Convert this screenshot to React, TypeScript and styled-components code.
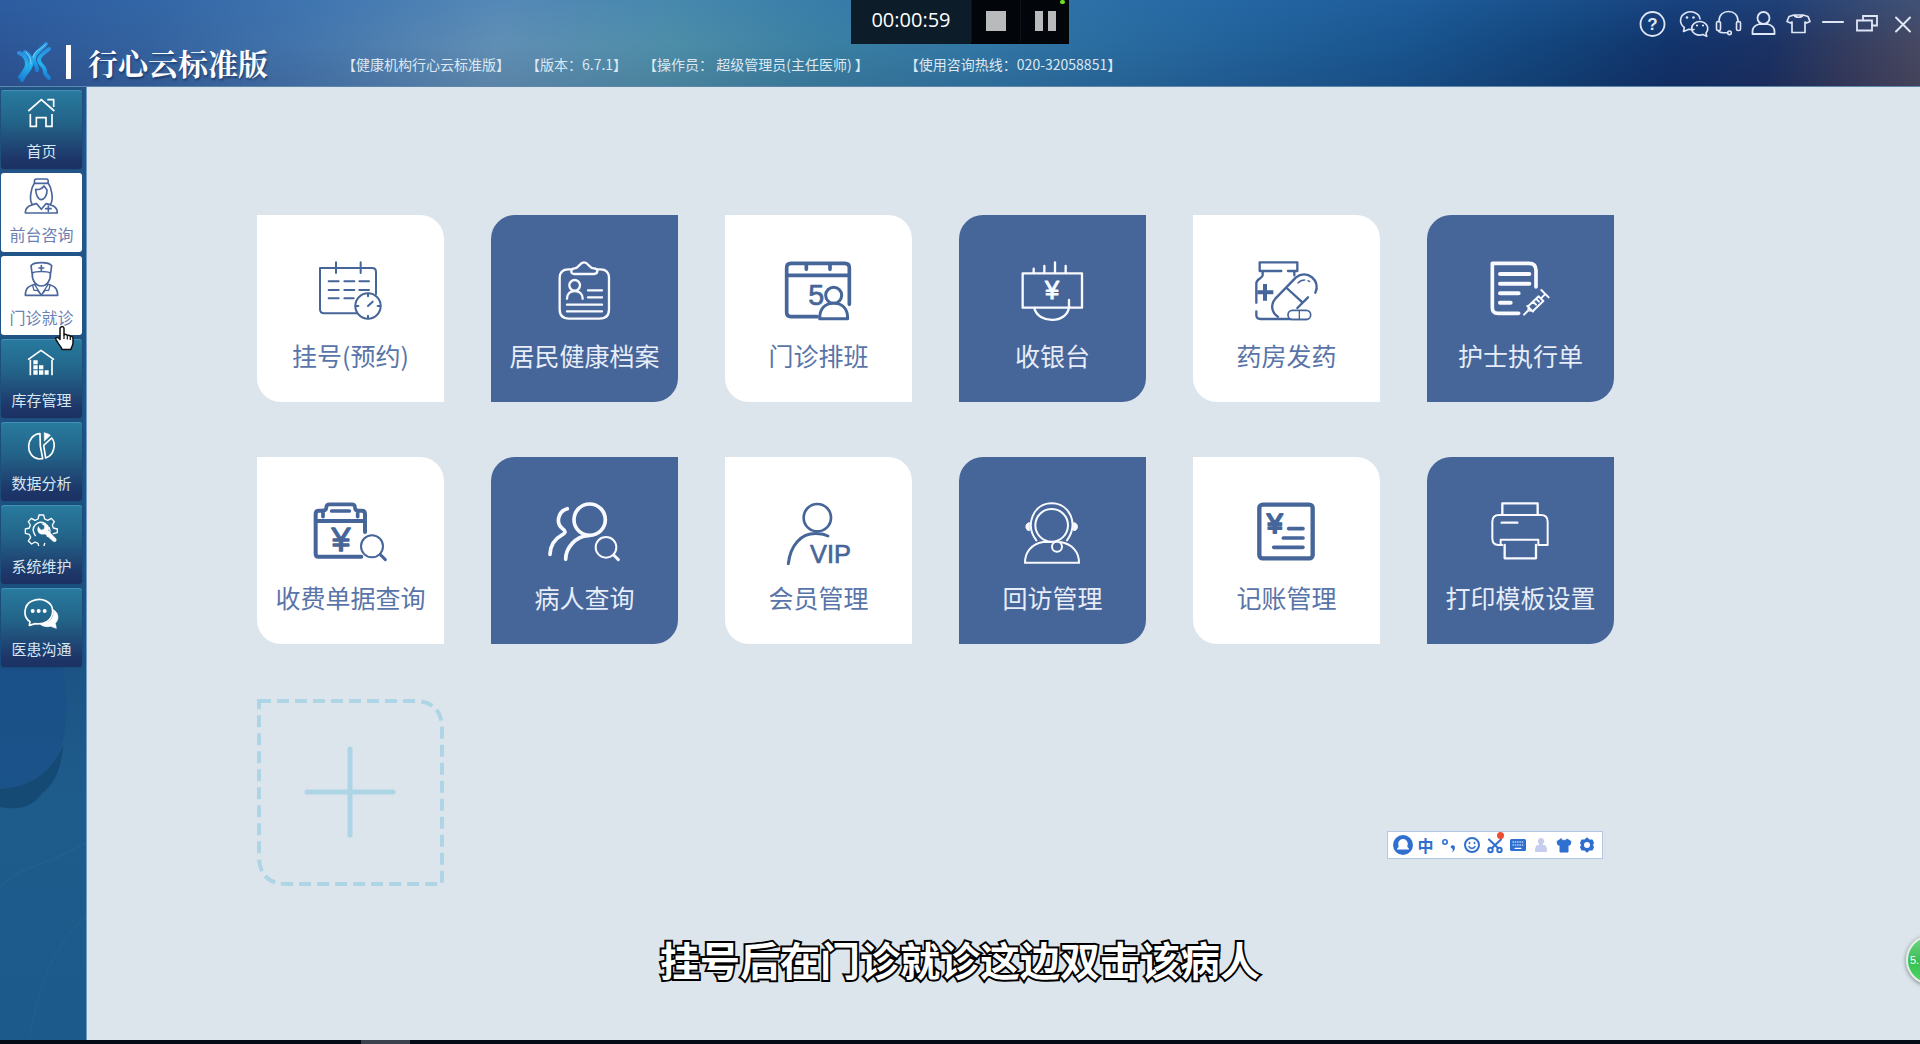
import React from 'react';
import styled, { createGlobalStyle, css } from 'styled-components';

const GlobalStyle = createGlobalStyle`
  *, *::before, *::after { box-sizing: border-box; }
  body {
    margin: 0;
    background: #dde5ec;
    font-family: "Noto Sans CJK SC", "Noto Sans", sans-serif;
  }
  button { font: inherit; border: 0; padding: 0; background: none; color: inherit; cursor: pointer; }
`;

const sans = '"Liberation Sans", sans-serif';

/* ---------- shell ---------- */

const Shell = styled.div`
  display: flex;
  flex-direction: column;
  min-height: 100vh;
  overflow-x: hidden;
`;

const Header = styled.header`
  display: flex;
  justify-content: space-between;
  height: 87px;
  padding: 0 0 0 16px;
  color: #fff;
  border-bottom: 1px solid #5d86ab;
  background:
    linear-gradient(180deg, rgba(50, 120, 190, 0.3) 0%, rgba(60, 130, 190, 0.1) 50%, rgba(40, 60, 100, 0.15) 100%),
    linear-gradient(98deg, #2a5193 0%, #335f9c 8%, #4473aa 16%, #6490b4 26%, #4f8fa6 35%, #3a7fa0 43%,
      #2f74a2 52%, #1f5f97 64%, #15508a 73%, #0d3a70 82%, #0d2a62 87%, #17295a 92%, #333555 96%, #4a4358 100%);
`;

const Brand = styled.div`
  display: flex;
  align-items: center;
  padding-top: 38px;
`;

const BrandBar = styled.span`
  width: 5px;
  height: 34px;
  margin: 0 17px 0 14px;
  background: #fff;
`;

const BrandTitle = styled.h1`
  margin: 0;
  width: 184px;
  font-family: "Noto Serif CJK SC", "Noto Sans CJK SC", serif;
  font-size: 30px;
  line-height: 40px;
  font-weight: 700;
  white-space: nowrap;
  text-shadow: 1px 2px 2px rgba(10, 30, 70, 0.5);
`;

const InfoList = styled.div`
  display: flex;
  gap: 16px;
  margin-left: 70px;
  padding-top: 4px;
  font-size: 14px;
  line-height: 20px;
  color: #dbe8f2;
  white-space: nowrap;
`;

const Info = styled.span<{ $wide?: boolean }>`
  margin-left: ${(p) => (p.$wide ? '20px' : '0')};
`;

const HeaderTools = styled.div`
  display: flex;
  align-items: flex-start;
  gap: 3px;
  padding: 8px 0 0 0;
`;

const ToolButton = styled.button`
  display: grid;
  place-items: center;
  width: 32px;
  height: 32px;

  &:first-child { margin-right: 5px; }
`;

const Body = styled.div`
  display: flex;
  flex: 1;
`;

/* ---------- side bar ---------- */

const SideBar = styled.nav`
  position: relative;
  display: flex;
  flex-direction: column;
  gap: 4px;
  width: 87px;
  padding: 3px 4px 0 1px;
  border-right: 1px solid #6f9cc4;
  background: linear-gradient(180deg, #24568a 0%, #1c5384 60%, #1e5c8c 75%, #1c5a8b 100%);
`;

const SideArt = styled.svg`
  position: absolute;
  left: 0;
  top: 560px;
  width: 86px;
  height: 390px;
`;

const NavItem = styled.button<{ $active?: boolean }>`
  position: relative;
  display: flex;
  flex-direction: column;
  align-items: center;
  gap: 10px;
  height: 79px;
  padding-top: 5px;
  border-radius: 3px;
  font-size: 15px;
  line-height: 20px;
  color: #d6e6f2;
  background: linear-gradient(180deg, #287b9f 0%, #236489 40%, #1d3568 88%, #1c3163 100%);
  box-shadow: inset 0 1px 0 rgba(120, 190, 220, 0.35), 0 0 3px rgba(20, 60, 90, 0.6);
  ${(p) =>
    p.$active &&
    css`
      font-size: 16px;
      color: #6b80b3;
      background: #fff;
      box-shadow: none;
    `}
`;

/* ---------- tiles ---------- */

const Main = styled.main`
  flex: 1;
  min-width: 0;
  padding: 128px 170px 120px;
  background: #dde5ec;
`;

const Grid = styled.div`
  display: grid;
  grid-template-columns: repeat(auto-fill, 187px);
  gap: 55px 47px;
`;

const Tile = styled.button<{ $dark: boolean }>`
  display: flex;
  flex-direction: column;
  align-items: center;
  gap: 14px;
  height: 187px;
  padding-top: 44px;
  font-size: 25px;
  line-height: 36px;
  font-weight: 400;
  white-space: nowrap;
  color: ${(p) => (p.$dark ? '#e6edf8' : '#5974a8')};
  background: ${(p) => (p.$dark ? '#466599' : '#fff')};
  border-radius: ${(p) => (p.$dark ? '24px 0' : '0 24px')};
`;

const TileSvg = styled.svg<{ $dark: boolean }>`
  width: 75px;
  height: 64px;
  overflow: visible;
  color: ${(p) => (p.$dark ? '#f8faff' : '#466599')};
  fill: none;
  stroke: currentColor;
  stroke-width: 7;
  stroke-linecap: round;
  stroke-linejoin: round;
`;

const AddTile = styled.button`
  height: 187px;
  color: #add5e6;
`;

/* ---------- things floating over the window ---------- */

const Recorder = styled.div`
  position: absolute;
  top: 0;
  left: 851px;
  display: flex;
  height: 44px;
  color: #fff;
  background: #02060b;
`;

const RecorderTime = styled.time`
  width: 120px;
  text-align: center;
  font-family: "Open Sans", sans-serif;
  font-size: 20px;
  line-height: 40px;
  background: #0c1c28;
`;

const RecorderButton = styled.button`
  display: flex;
  align-items: center;
  justify-content: center;
  gap: 5px;
  width: 49px;
  height: 42px;
  border-left: 1px solid #0c141b;
`;

const Block = styled.span<{ $w: number }>`
  width: ${(p) => p.$w}px;
  height: 20px;
  background: #b9babc;
`;

const RecorderDot = styled.span`
  position: absolute;
  top: 0;
  right: 4px;
  width: 5px;
  height: 4px;
  border-radius: 2px;
  background: #6fe31c;
`;

const ImeBar = styled.div`
  position: absolute;
  left: 1387px;
  top: 831px;
  display: flex;
  align-items: center;
  width: 216px;
  height: 28px;
  padding: 0 4px 0 3px;
  border: 1px solid #b3c8e4;
  background: #fff;
  color: #2f6fd0;
`;

const ImeButton = styled.button`
  position: relative;
  display: grid;
  place-items: center;
  flex: 1;
  height: 26px;
  font-size: 16px;
  line-height: 24px;
  font-weight: 700;
`;

const RedDot = styled.span`
  position: absolute;
  top: 0;
  right: 2px;
  width: 7px;
  height: 7px;
  border-radius: 50%;
  background: #ee4b33;
`;

const BallClip = styled.div`
  position: absolute;
  right: 0;
  top: 930px;
  width: 20px;
  height: 64px;
  overflow: hidden;
`;

const Ball = styled.div`
  width: 50px;
  height: 50px;
  margin: 5px 0 0 6px;
  padding-left: 2px;
  border: 2px solid #e3eee6;
  border-radius: 50%;
  background: linear-gradient(180deg, #6fd583 0%, #40bf5b 48%, #35c152 52%, #4fd466 100%);
  box-shadow: 0 1px 4px rgba(60, 80, 70, 0.7);
  color: #fff;
  font-family: ${sans};
  font-size: 11px;
  line-height: 46px;
`;

const Caption = styled.p`
  position: absolute;
  left: 0;
  right: 0;
  top: 929px;
  margin: 0;
  text-align: center;
  font-size: 40px;
  line-height: 60px;
  font-weight: 700;
  color: #fff;
  -webkit-text-stroke: 4px #000;
  paint-order: stroke fill;
  pointer-events: none;
`;

const Pointer = styled.svg`
  position: absolute;
  left: 54px;
  top: 325px;
  width: 21px;
  height: 26px;
`;

const TaskBar = styled.footer`
  height: 4px;
  padding-left: 361px;
  background: #040a16;
`;

const TaskMark = styled.div`
  width: 49px;
  height: 4px;
  background: #3c434e;
`;

/* ---------- drawings ---------- */

const Logo = () => (
  <svg width="36" height="42" viewBox="0 0 36 42" fill="none" strokeLinecap="round" aria-hidden="true">
    <defs>
      <linearGradient id="lg" x1="0" y1="0" x2="0" y2="1">
        <stop offset="0" stopColor="#2a8fe0" />
        <stop offset="0.5" stopColor="#23b4f0" />
        <stop offset="1" stopColor="#1c7fd6" />
      </linearGradient>
    </defs>
    <g stroke="url(#lg)" strokeWidth="4">
      <path d="M30 3c-5 6-11 8-12 14-1 5 4 8 3 12" />
      <path d="M33 8c-5 4-9 6-10 10-1 5 7 8 6 13 0 3 3 4 4 6" />
      <path d="M3 12c5 1 8 6 8 11s-4 9-7 13" />
      <path d="M9 11c5 3 7 8 6 13-1 6-7 8-9 15" />
    </g>
    <path d="M30 3C25 9 19 9 17 16M10 11c4 4 5 8 5 12" stroke="#7fd8ff" strokeWidth="1" />
  </svg>
);

const HeadSvg = styled.svg`
  width: 32px;
  height: 32px;
  fill: none;
  stroke: #dfe6f5;
  stroke-width: 1.8;
  stroke-linecap: round;
  stroke-linejoin: round;
`;

const tools: { label: string; art: React.ReactNode }[] = [
  {
    label: '帮助',
    art: (
      <>
        <circle cx="14.5" cy="16" r="12" />
        <text x="14.5" y="22" textAnchor="middle" fontSize="17" fontFamily={sans} fontWeight="700" fill="#dfe6f5" stroke="none">?</text>
      </>
    ),
  },
  {
    label: '微信',
    art: (
      <g strokeWidth="1.6">
        <path d="M16 21.500c-2 .3-3.500.2-5-.3L5.500 23.500l.8-4C.8 15.500 1.500 8 7.500 5c6.500-3 14 .2 14.500 6" />
        <path d="M28 25c3.500-4 1.500-10-4.500-11.300-6-1-10.300 3.300-9.800 7.300.6 5 6.300 7.300 11 5.500l4 1.800z" />
        <g fill="#dfe6f5" stroke="none">
          <circle cx="9" cy="9.500" r="1.300" /><circle cx="15.500" cy="9.500" r="1.300" />
          <circle cx="19" cy="17.500" r="1.100" /><circle cx="25" cy="17.500" r="1.100" />
        </g>
      </g>
    ),
  },
  {
    label: '客服',
    art: (
      <g strokeWidth="1.600">
        <path d="M6 14v-1c0-6 4-9.500 9.500-9.500S25 7 25 13v1" />
        <rect x="3.500" y="13.500" width="4" height="9" rx="1.500" />
        <rect x="23.500" y="13.500" width="4" height="9" rx="1.500" />
        <path d="M5 22.500c1 2.500 4 2.300 9.500 2.300" />
        <circle cx="16.500" cy="24.800" r="1.800" />
      </g>
    ),
  },
  {
    label: '用户',
    art: (
      <>
        <circle cx="15.500" cy="10" r="6" />
        <path d="M4.500 26v-2.500c0-4 3-6.500 7-7.500h8c4 1 7 3.500 7 7.500V26z" />
      </>
    ),
  },
  {
    label: '皮肤',
    art: (
      <path d="M11 7L6 8.500 4 13.500l3.500 1.500L9 14v10.500h13V14l1.500 1 3.500-1.500-2-5L20 7c-1.500 3-7.500 3-9 0zM11 7h9" strokeWidth="1.700" />
    ),
  },
  { label: '最小化', art: <path d="M5 14h20" strokeWidth="2.200" /> },
  {
    label: '还原',
    art: (
      <g strokeWidth="1.800" strokeLinejoin="miter">
        <path d="M4 12.500h15v10H4z" />
        <path d="M10 12V8h14v9.500h-5" />
      </g>
    ),
  },
  { label: '关闭', art: <path d="M8 9.500l14 14M22 9.500l-14 14" strokeWidth="2" /> },
];

const NavSvg = styled.svg`
  width: 36px;
  height: 36px;
  fill: none;
  stroke: currentColor;
  stroke-width: 5;
  stroke-linecap: round;
  stroke-linejoin: round;
`;

const navs: { label: string; active?: boolean; box: string; art: React.ReactNode }[] = [
  {
    label: '首页',
    box: '72 45 108 108',
    art: (
      <g stroke="#fff" strokeLinecap="butt" strokeLinejoin="miter">
        <path d="M85 93l39-34 39 34M142 59h19v22" />
        <path d="M91 102v37h18v-26h29v26h18v-37" />
      </g>
    ),
  },
  {
    label: '前台咨询',
    active: true,
    box: '72 295 108 108',
    art: (
      <g stroke="#4a659c">
        <path d="M104 311c-2-12 1-13 6-13h28c5 0 8 1 6 13z" />
        <path d="M103 311c-10 14-16 47-7 62M145 311c10 14 16 47 7 62" />
        <path d="M107 329c8 2 20-2 25-10 4 6 8 9 9 12 1 14-8 29-17 29s-17-14-17-31z" />
        <path d="M76 400c0-18 10-22 34-28l14 17 14-17c24 6 34 10 34 28z" />
        <path d="M145 379v16M137 387h16" />
      </g>
    ),
  },
  {
    label: '门诊就诊',
    active: true,
    box: '72 544 108 108',
    art: (
      <g stroke="#4a659c">
        <path d="M96 580l-3-22c8-12 54-12 62 0l-3 22c-12-6-44-6-56 0z" />
        <path d="M124 558v14M117 565h14" />
        <path d="M97 580c-2 20 9 39 27 39s29-19 27-39" />
        <path d="M108 613c-22 5-32 12-32 34h97c0-22-10-29-32-34" />
        <path d="M104 615l20 31 20-31M98 618l4 14h10l12 14 12-14h10l4-14" strokeWidth="4" />
      </g>
    ),
  },
  {
    label: '库存管理',
    box: '72 793 108 108',
    art: (
      <>
        <path d="M84 840l39-28 39 28M91 840v47M156 840v47" stroke="#fff" strokeLinecap="butt" />
        <g fill="#fff" stroke="none">
          <path d="M100 842h13v12h-13zM100 857h13v12h-13zM100 872h13v13h-13zM117 857h13v12h-13zM117 872h13v13h-13zM134 872h12v13h-12z" />
        </g>
      </>
    ),
  },
  {
    label: '数据分析',
    box: '72 -3 108 108',
    art: (
      <g stroke="#fff">
        <path d="M120 17c-42 2-48 70-2 76l10-1-7-38z" />
        <path d="M131 52l24-22c14 16 8 52-18 60z" />
        <path d="M133 15v24l18-17c-5-4-11-6-18-7z" fill="#fff" strokeWidth="2" />
      </g>
    ),
  },
  {
    label: '系统维护',
    box: '72 -3 108 108',
    art: (
      <g stroke="#fff">
        <path d="M117 12h14l3 12 9 4 11-6 9 10-6 10 3 9 12 3v11l-12 3M117 12l-3 12-9 4-11-6-9 10 6 10-3 9-12 3v13l12 3 4 9-7 11 10 9 10-6 9 4 3 11h14l3-11" strokeWidth="4" />
        <path d="M106 74c-18-28 8-48 30-36M142 76c8-8 9-19 6-26" strokeWidth="4" />
        <path d="M115 47l8 10 9-2 2-10-9-7c18-4 26 10 20 21l23 24c4 7-4 12-9 8l-24-22c-17 5-27-10-20-22z" fill="#fff" strokeWidth="1" />
      </g>
    ),
  },
  {
    label: '医患沟通',
    box: '72 -5 108 108',
    art: (
      <g stroke="#fff">
        <path d="M161 46c14 7 18 27 5 40l3 15-17-6c-12 3-26 0-33-8 28 0 44-14 42-41z" fill="#fff" strokeWidth="2" />
        <path d="M90 81c-22-14-20-50 6-62 28-13 62 2 62 30s-26 42-52 38L88 92z" />
        <g fill="#fff" stroke="none">
          <circle cx="98" cy="49" r="6" /><circle cx="116" cy="49" r="6" /><circle cx="134" cy="49" r="6" />
        </g>
      </g>
    ),
  },
];

const tiles: { label: string; box: string; art: React.ReactNode }[] = [
  {
    label: '挂号(预约)',
    box: '221 177 225 192',
    art: (
      <>
        <path d="M352 340h-98q-12 0-12-12V204h156q12 0 12 12v66" strokeWidth="6" />
        <path d="M290 187v32M364 187v32M268 244h30M315 244h30M360 244h29M268 270h30M315 270h30M360 270h29M268 295h30M315 295h28" strokeWidth="6" />
        <circle cx="386" cy="318" r="38" strokeWidth="6" />
        <path d="M386 318l14-13M386 281v8M386 347v8M349 318h8M415 318h8" strokeWidth="6" />
      </>
    ),
  },
  {
    label: '居民健康档案',
    box: '922 177 225 192',
    art: (
      <>
        <path d="M996 208h-10q-26 0-26 26v94q0 28 28 28h92q28 0 28-28v-94q0-26-26-26h-8" />
        <path d="M1004 222q-10 0-9-9 1-8 10-8c14 0 14-18 28-18s14 18 30 18q10 0 10 8t-10 9z" />
        <circle cx="1005" cy="256" r="16" />
        <path d="M982 296c0-14 9-23 23-23s24 9 24 23" />
        <path d="M1045 271h42M1045 292h42M982 314h105M982 334h105" />
      </>
    ),
  },
  {
    label: '门诊排班',
    box: '244 177 225 192',
    art: (
      <>
        <path d="M352 350h-78q-13 0-13-13V203q0-13 13-13h161q14 0 14 13v110M261 226h188M320 192v16M391 192v16" strokeWidth="11" />
        <text x="326" y="315" fontSize="86" fontFamily={sans} fill="currentColor" strokeWidth="2">5</text>
        <circle cx="402" cy="286" r="24" fill="#fff" strokeWidth="9" />
        <path d="M360 356c0-28 14-46 42-46s42 18 42 46z" fill="#fff" strokeWidth="9" />
      </>
    ),
  },
  {
    label: '收银台',
    box: '946 177 225 192',
    art: (
      <>
        <path d="M969 220h178v103H969zM1002 218v-12M1034 218v-20M1066 218v-31M1098 218v-20" />
        <path d="M1004 324c10 48 100 48 104-4v-20" />
        <text x="1057" y="298" textAnchor="middle" fontSize="76" fontFamily={sans} fill="currentColor" strokeWidth="3">¥</text>
      </>
    ),
  },
  {
    label: '药房发药',
    box: '237 177 225 192',
    art: (
      <>
        <path d="M269 187h113v26h-28M334 213h-65v-26M278 214v12c0 10-19 10-19 24v58M373 214v12M259 334v12q0 11 12 11h140" />
        <path d="M285 252v50M262 277h48" strokeWidth="12" strokeLinecap="butt" />
        <path d="M324 350c-20-12-23-36-8-54l62-64c32-26 76 10 58 46M350 264l44 40M414 292l-32 32" />
        <path d="M384 249q8-9 20-9M414 242l5 3" strokeWidth="4" />
        <rect x="354" y="331" width="68" height="27" rx="13" fill="#fff" strokeWidth="5" />
        <path d="M388 332v25" strokeWidth="4" />
      </>
    ),
  },
  {
    label: '护士执行单',
    box: '939 177 225 192',
    art: (
      <>
        <path d="M1046 340h-62q-17 0-17-17V190h110q21 0 21 21v50" strokeWidth="11" />
        <path d="M990 222h88M990 251h88M990 280h56M990 308h32" strokeWidth="12" />
        <path d="M1062 344l11-11M1072 318l17 17M1076 317l30-28 14 14-31 30-14-2zM1114 270l22 22M1112 296l13-13M1090 306l8 8M1099 297l8 8" strokeWidth="6" />
      </>
    ),
  },
  {
    label: '收费单据查询',
    box: '220 184 225 192',
    art: (
      <>
        <path d="M365 351H236q-8 0-8-8V223q0-10 10-10h12M354 213h12q10 0 10 10v54M228 244h148" strokeWidth="12" />
        <path d="M250 231v-18q10 0 10-10 0-9 10-9h66q10 0 10 9 0 10 8 10v18M276 214h53" strokeWidth="11" />
        <text x="304" y="335" textAnchor="middle" fontSize="102" fontFamily={sans} fill="currentColor" strokeWidth="4">¥</text>
        <circle cx="397" cy="320" r="33" strokeWidth="6" />
        <path d="M422 345l15 15" strokeWidth="9" />
      </>
    ),
  },
  {
    label: '病人查询',
    box: '922 184 225 192',
    art: (
      <>
        <circle cx="1050" cy="240" r="47" strokeWidth="11" />
        <path d="M983 207c-28 8-36 44-14 60 12 8 8 14-4 20-22 12-33 32-34 57M1046 288c-38 2-68 36-68 71" strokeWidth="11" />
        <circle cx="1099" cy="323" r="31" strokeWidth="6" />
        <path d="M1122 346l14 14" strokeWidth="9" />
      </>
    ),
  },
  {
    label: '会员管理',
    box: '244 184 225 192',
    art: (
      <>
        <circle cx="353" cy="234" r="41" strokeWidth="8" />
        <path d="M266 372c6-52 36-96 92-90 10 0 18 3 27 7" strokeWidth="9" />
        <text x="331" y="371" fontSize="76" fontFamily={sans} fill="currentColor" strokeWidth="2">VIP</text>
      </>
    ),
  },
  {
    label: '回访管理',
    box: '946 184 225 192',
    art: (
      <>
        <circle cx="1056" cy="257" r="49" strokeWidth="6" />
        <path d="M1010 302c-36-48-8-111 46-111s82 60 46 111" strokeWidth="6" />
        <path d="M989 249c-14 0-14 24 0 24zM1123 249c14 0 14 24 0 24z" fill="currentColor" strokeWidth="3" />
        <path d="M1030 307c-36 6-54 32-54 62h162c0-32-20-56-56-62" strokeWidth="6" strokeLinejoin="miter" />
        <path d="M1030 307h26" strokeWidth="6" />
        <circle cx="1072" cy="321" r="15" strokeWidth="6" />
      </>
    ),
  },
  {
    label: '记账管理',
    box: '237 184 225 192',
    art: (
      <>
        <rect x="268" y="195" width="160" height="161" rx="10" strokeWidth="13" />
        <text x="314" y="281" textAnchor="middle" fontSize="84" fontFamily={sans} fill="currentColor" strokeWidth="6">¥</text>
        <path d="M356 267h43M340 295h59M311 323h88" strokeWidth="11" />
      </>
    ),
  },
  {
    label: '打印模板设置',
    box: '939 184 225 192',
    art: (
      <>
        <path d="M997 224v-33h106v33M995 249h47" />
        <path d="M997 316h-12q-18 0-18-20v-50q0-20 20-20h126q20 0 20 20v70h-28v-16H992v16" strokeWidth="6" />
        <path d="M1004 316v40h94v-40" />
      </>
    ),
  },
];

const Kit = styled.svg`
  width: 20px;
  height: 22px;
  fill: none;
  stroke: currentColor;
  stroke-width: 2;
  stroke-linecap: round;
  stroke-linejoin: round;
`;

const ime: { label: string; dot?: boolean; art: React.ReactNode }[] = [
  {
    label: '输入法',
    art: (
      <Kit viewBox="0 0 20 22">
        <circle cx="10" cy="11" r="10" fill="currentColor" stroke="none" />
        <path d="M10 5a4.800 4.800 0 0 1 4.800 4.800c0 1.500-.8 2-.3 3.200.3 1 1.500 1 1.500 2.500H4c0-1.500 1.200-1.500 1.500-2.500.5-1.200-.3-1.700-.3-3.200A4.800 4.800 0 0 1 10 5z" fill="#fff" stroke="none" />
      </Kit>
    ),
  },
  { label: '中文', art: '中' },
  {
    label: '标点',
    art: (
      <Kit viewBox="0 0 20 22">
        <circle cx="6" cy="8" r="2.200" strokeWidth="1.600" />
        <path d="M11.500 13a2.200 2.200 0 1 1 4.400.8c0 2-1 3.700-3 4.700 1-1.500 1-2.500.8-3.300z" fill="currentColor" stroke="none" />
      </Kit>
    ),
  },
  {
    label: '表情',
    art: (
      <Kit viewBox="0 0 20 22">
        <circle cx="10" cy="11" r="7" />
        <path d="M7.500 8.500v1M12.500 8.500v1M7 12.500c1 2.500 5 2.500 6 0" strokeWidth="1.600" />
      </Kit>
    ),
  },
  {
    label: '截图',
    dot: true,
    art: (
      <Kit viewBox="0 0 20 22">
        <circle cx="5.500" cy="16" r="2.200" /><circle cx="14.500" cy="16" r="2.200" />
        <path d="M4 5.500l9 8.500M16 5.500L7 14" />
      </Kit>
    ),
  },
  {
    label: '软键盘',
    art: (
      <Kit viewBox="0 0 20 22">
        <rect x="2" y="5" width="16" height="12" rx="1.500" fill="currentColor" stroke="none" />
        <path d="M4.500 8h11M4.500 11h11" stroke="#fff" strokeWidth="1.200" strokeDasharray="1.500 .8" strokeLinecap="butt" />
        <path d="M7 14.300h6" stroke="#fff" strokeWidth="1.200" />
      </Kit>
    ),
  },
  {
    label: '账号',
    art: (
      <Kit viewBox="0 0 20 22">
        <path d="M10 4a3.200 3.200 0 0 1 2 5.700V11h1.500c2 .5 2.500 3 2.500 7H4c0-4 .5-6.500 2.500-7H8V9.700A3.200 3.200 0 0 1 10 4z" fill="#c6cdef" stroke="none" />
      </Kit>
    ),
  },
  {
    label: '换肤',
    art: (
      <Kit viewBox="0 0 20 22">
        <path d="M7 5L3 7.500l1 3.500h2v7h8v-7h2l1-3.500L13 5c-1 2-5 2-6 0z" fill="currentColor" strokeWidth="1" />
      </Kit>
    ),
  },
  {
    label: '设置',
    art: (
      <Kit viewBox="0 0 20 22">
        <path d="M10 4.500l2 2h3l1 2.500-1.200 2L16 13l-1 2.500h-3l-2 2-2-2H5L4 13l1.200-2L4 9l1-2.500h3z" fill="currentColor" />
        <circle cx="10" cy="11" r="3" fill="#fff" stroke="none" />
      </Kit>
    ),
  },
];

export default function App() {
  return (
    <Shell>
      <GlobalStyle />
      <Header>
        <Brand>
          <Logo />
          <BrandBar />
          <BrandTitle>行心云标准版</BrandTitle>
          <InfoList>
            <Info>【健康机构行心云标准版】</Info>
            <Info>【版本：6.7.1】</Info>
            <Info>【操作员： 超级管理员(主任医师) 】</Info>
            <Info $wide>【使用咨询热线：020-32058851】</Info>
          </InfoList>
        </Brand>
        <HeaderTools>
          {tools.map((t) => (
            <ToolButton key={t.label} aria-label={t.label}>
              <HeadSvg viewBox="0 0 32 32">{t.art}</HeadSvg>
            </ToolButton>
          ))}
        </HeaderTools>
      </Header>

      <Body>
        <SideBar>
          <SideArt viewBox="0 0 86 390" aria-hidden="true">
            <path d="M0 0h58c8 30 12 70 4 96-8 26-26 46-62 46z" fill="#1a5089" opacity="0.7" />
            <path d="M63 98c-10 24-28 42-63 44v18c22 4 34-2 42-14 12-8 20-26 21-48z" fill="#144a73" />
            <path d="M0 240c20-22 50-22 86-44" stroke="#2b6795" fill="none" strokeWidth="2" opacity="0.4" />
            <path d="M30 390c10-60 30-100 56-120" stroke="#2b6795" fill="none" strokeWidth="2" opacity="0.3" />
          </SideArt>
          {navs.map((n) => (
            <NavItem key={n.label} $active={n.active}>
              <NavSvg viewBox={n.box} aria-hidden="true">{n.art}</NavSvg>
              {n.label}
            </NavItem>
          ))}
        </SideBar>

        <Main>
          <Grid>
            {tiles.map((t, i) => (
              <Tile key={t.label} $dark={i % 2 === 1}>
                <TileSvg $dark={i % 2 === 1} viewBox={t.box} aria-hidden="true">{t.art}</TileSvg>
                {t.label}
              </Tile>
            ))}
            <AddTile aria-label="添加">
              <svg width="187" height="187" viewBox="0 0 187 187" fill="none" stroke="currentColor" aria-hidden="true">
                <path d="M2 2h155q28 0 28 28v155H30Q2 185 2 157z" strokeWidth="4" strokeDasharray="12 6" />
                <path d="M93 50v86M50 93h86" strokeWidth="5" strokeLinecap="round" />
              </svg>
            </AddTile>
          </Grid>
        </Main>
      </Body>

      <TaskBar>
        <TaskMark />
      </TaskBar>

      <Recorder>
        <RecorderTime>00:00:59</RecorderTime>
        <RecorderButton aria-label="停止"><Block $w={20} /></RecorderButton>
        <RecorderButton aria-label="暂停"><Block $w={8} /><Block $w={8} /></RecorderButton>
        <RecorderDot />
      </Recorder>

      <ImeBar>
        {ime.map((k) => (
          <ImeButton key={k.label} aria-label={k.label}>
            {k.art}
            {k.dot && <RedDot />}
          </ImeButton>
        ))}
      </ImeBar>

      <BallClip>
        <Ball>5.</Ball>
      </BallClip>

      <Caption>挂号后在门诊就诊这边双击该病人</Caption>

      <Pointer viewBox="0 0 21 26" aria-hidden="true">
        <path
          d="M7 2c1.500-1 3 0 3 1.500V10c1-1 3-.8 3.300.6 1-.8 2.700-.4 3 .9 1.200-.5 2.700.2 2.700 1.800V18c0 3-2 4-2 6.500H8c-.5-2.500-3-4.500-4.500-7.500-1-1.500-2.500-3-1.500-4.200 1-1 2.800 0 4 1.700V3.500C6 3 6.300 2.400 7 2z"
          fill="#fff"
          stroke="#111"
          strokeWidth="1.500"
          strokeLinejoin="round"
        />
        <path d="M10 10v4M13.300 11v3.500M16.300 12v3" stroke="#111" strokeWidth="1.200" />
      </Pointer>
    </Shell>
  );
}
